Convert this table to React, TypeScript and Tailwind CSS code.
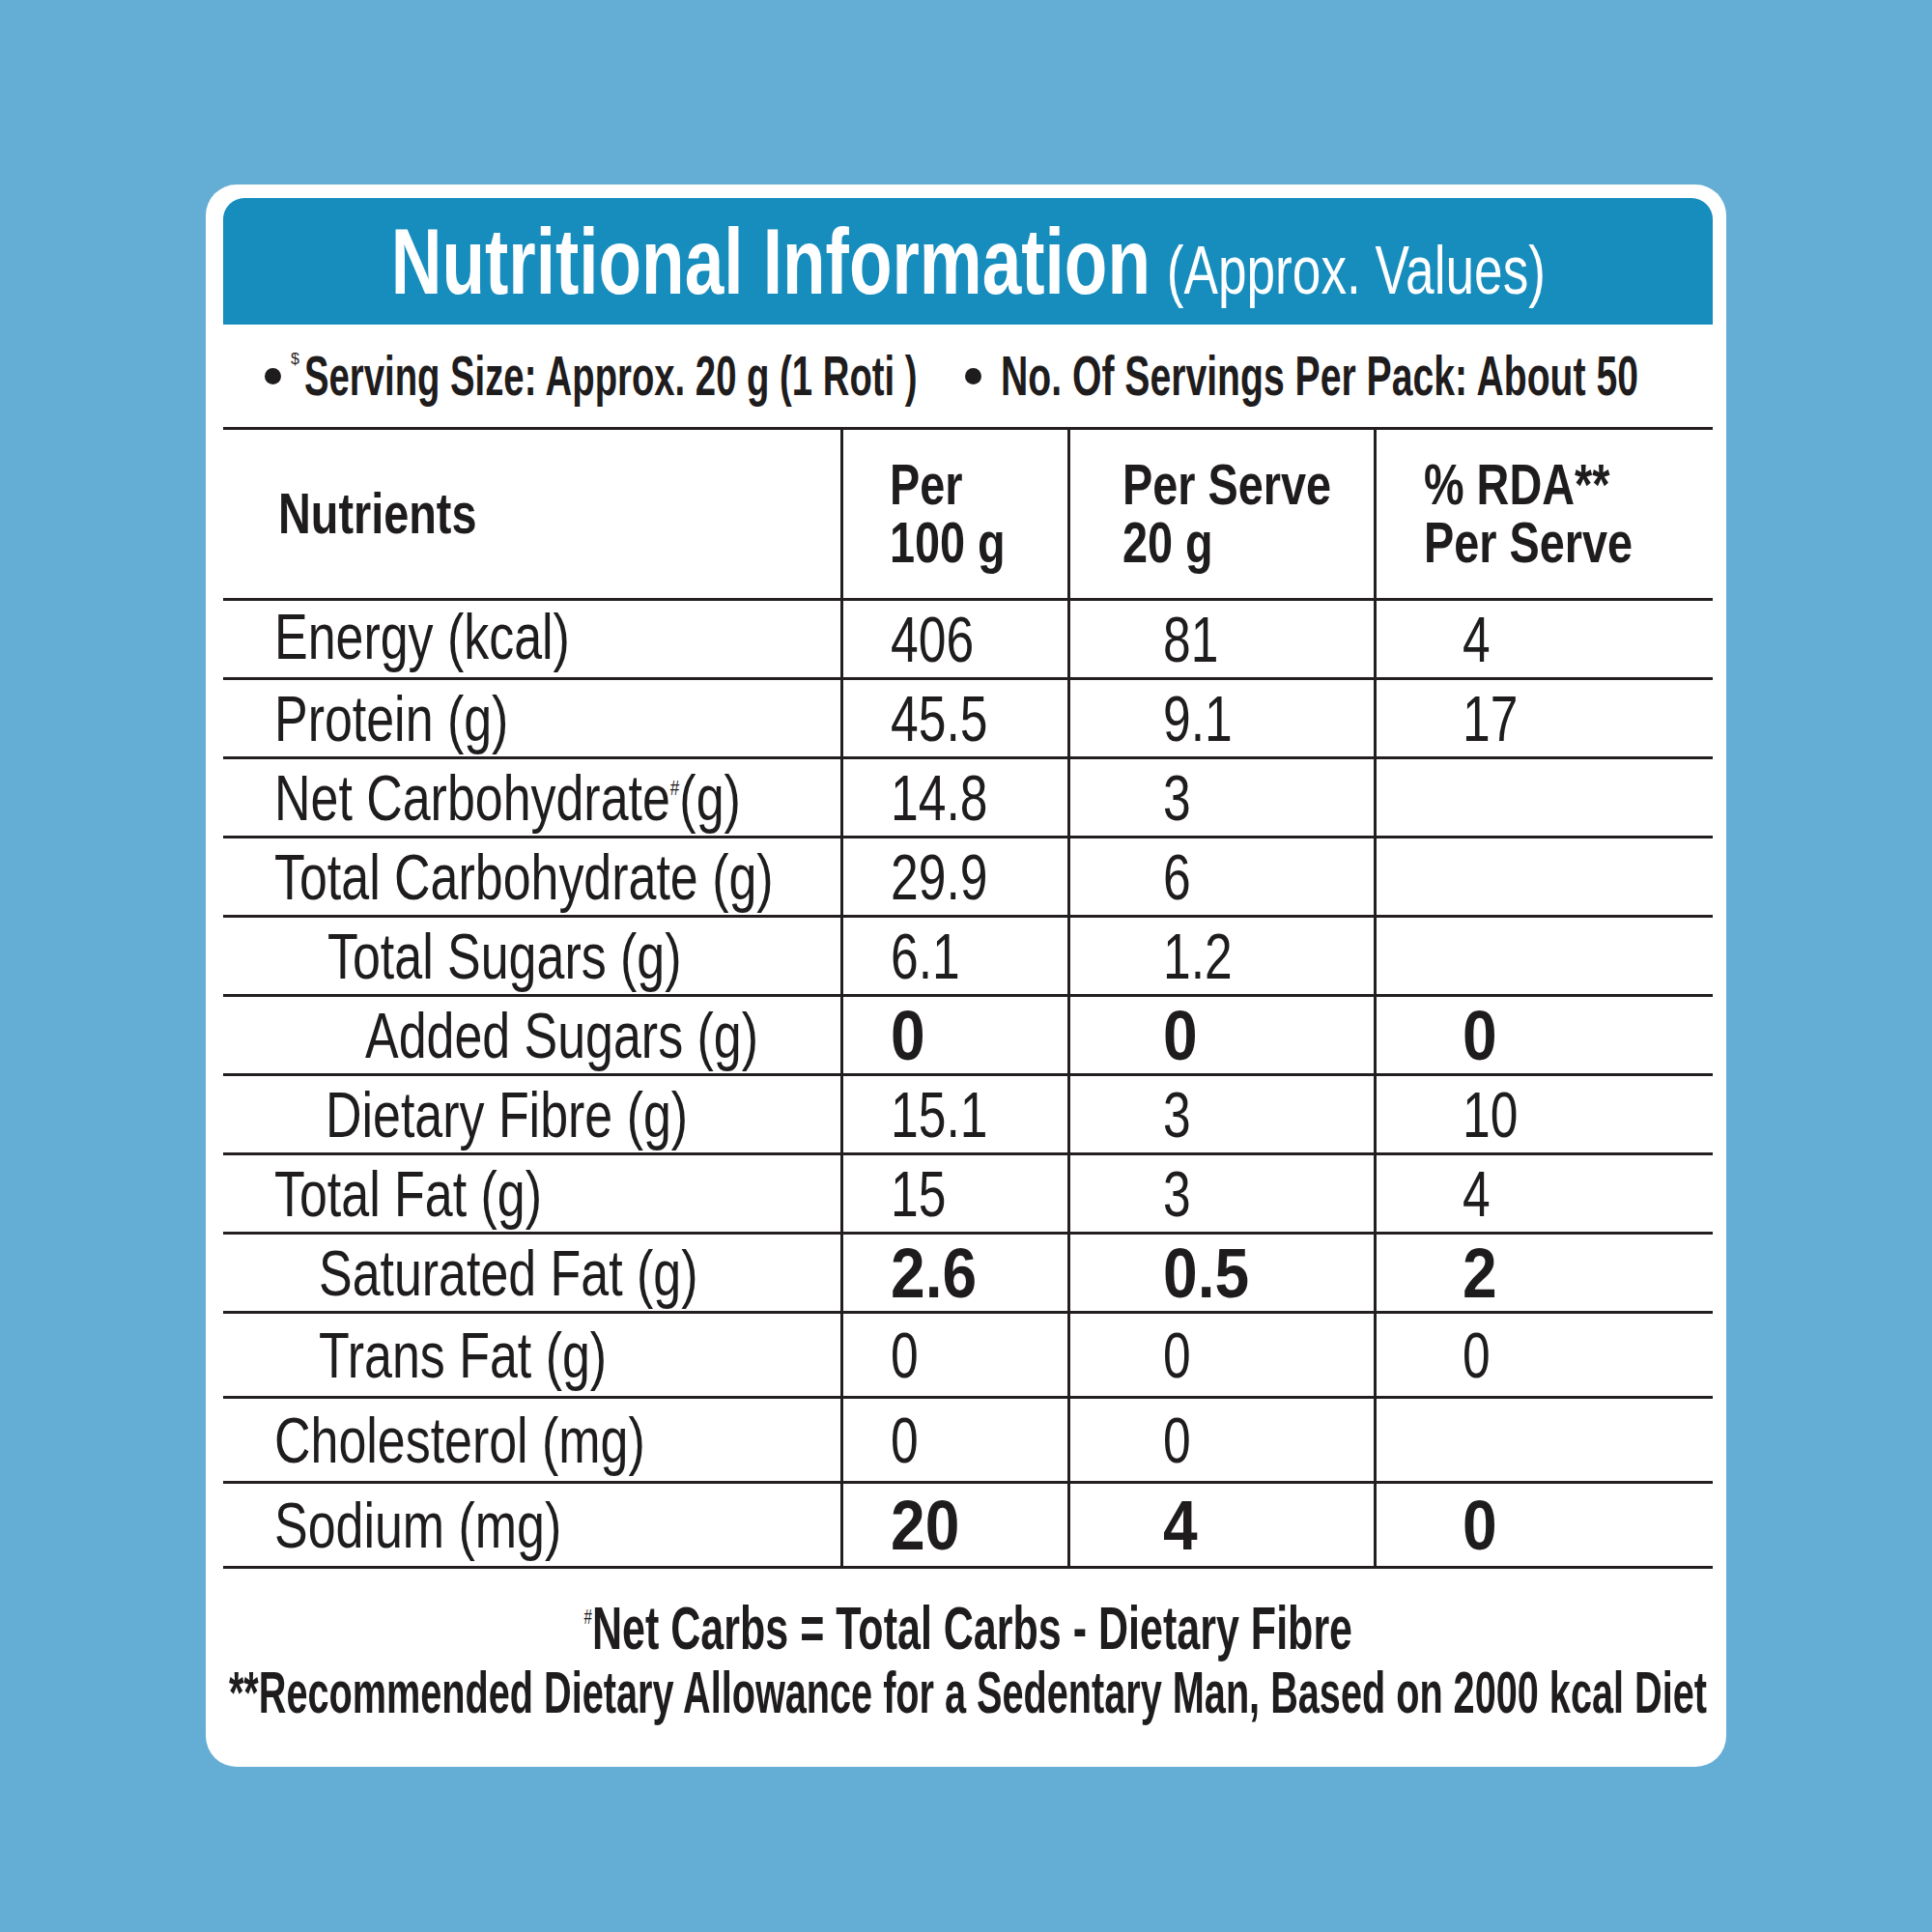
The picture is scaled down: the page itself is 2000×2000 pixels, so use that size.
import React from 'react'

type Row = {
  name: React.ReactNode
  indent: string
  tall?: boolean
  bold?: boolean
  v: [string, string, string]
}

const rows: Row[] = [
  { name: 'Energy (kcal)', indent: 'pl-[53px] pb-[6px]', v: ['406', '81', '4'] },
  { name: 'Protein (g)', indent: 'pl-[53px]', v: ['45.5', '9.1', '17'] },
  {
    name: (
      <>
        Net Carbohydrate
        <span className="relative -top-[26px] text-[22px]">#</span>
        (g)
      </>
    ),
    indent: 'pl-[53px]',
    v: ['14.8', '3', ''],
  },
  { name: 'Total Carbohydrate (g)', indent: 'pl-[53px]', v: ['29.9', '6', ''] },
  { name: 'Total Sugars (g)', indent: 'pl-[108px]', v: ['6.1', '1.2', ''] },
  { name: 'Added Sugars (g)', indent: 'pl-[147px]', v: ['0', '0', '0'], bold: true },
  { name: 'Dietary Fibre (g)', indent: 'pl-[106px]', v: ['15.1', '3', '10'] },
  { name: 'Total Fat (g)', indent: 'pl-[53px]', v: ['15', '3', '4'] },
  { name: 'Saturated Fat (g)', indent: 'pl-[99px]', v: ['2.6', '0.5', '2'], bold: true },
  { name: 'Trans Fat (g)', indent: 'pl-[99px]', v: ['0', '0', '0'], tall: true },
  { name: 'Cholesterol (mg)', indent: 'pl-[53px]', v: ['0', '0', ''], tall: true },
  { name: 'Sodium (mg)', indent: 'pl-[53px]', v: ['20', '4', '0'], tall: true, bold: true },
]

function Value({ text, bold }: { text: string; bold?: boolean }) {
  if (bold) {
    return (
      <span className="inline-block origin-left scale-x-[0.89] whitespace-nowrap text-[72px] font-bold leading-none">
        {text}
      </span>
    )
  }
  return (
    <span className="inline-block origin-left scale-x-[0.77] whitespace-nowrap text-[67px] leading-none">
      {text}
    </span>
  )
}

function NutrientRow({ row }: { row: Row }) {
  return (
    <div
      className={`grid grid-cols-[639px_235px_317px_351px] border-b-[3px] border-[#231f20] ${
        row.tall ? 'h-[88px]' : 'h-[82px]'
      }`}
    >
      <div className={`flex items-center ${row.indent}`}>
        <span className="inline-block origin-left scale-x-[0.775] whitespace-nowrap text-[67px] leading-none">
          {row.name}
        </span>
      </div>
      <div className="flex items-center border-l-[3px] border-[#231f20] pl-[49px]">
        <Value text={row.v[0]} bold={row.bold} />
      </div>
      <div className="flex items-center border-l-[3px] border-[#231f20] pl-[96px]">
        <Value text={row.v[1]} bold={row.bold} />
      </div>
      <div className="flex items-center border-l-[3px] border-[#231f20] pl-[89px]">
        <Value text={row.v[2]} bold={row.bold} />
      </div>
    </div>
  )
}

function HeadLines({ a, b }: { a: string; b: string }) {
  return (
    <div className="flex flex-col items-start justify-center">
      <span className="inline-block h-[60px] origin-left scale-x-[0.78] whitespace-nowrap">{a}</span>
      <span className="inline-block h-[60px] origin-left scale-x-[0.78] whitespace-nowrap">{b}</span>
    </div>
  )
}

export default function App() {
  return (
    <div className="h-[2000px] w-[2000px] bg-[#64add5] pl-[213px] pt-[191px] font-['Liberation_Sans',Arial,sans-serif] text-[#1f1c1d]">
      <div className="flex h-[1638px] w-[1574px] flex-col rounded-[32px] bg-white pl-[18px] pr-[14px] pt-[14px]">
        {/* header band */}
        <div className="flex h-[131px] items-center justify-center rounded-t-[22px] bg-[#178dbe] text-white">
          <span className="inline-block shrink-0 origin-center scale-x-[0.76] whitespace-nowrap leading-none">
            <span className="text-[96px] font-bold">Nutritional Information</span>
            <span className="ml-[22px] text-[70px]">(Approx. Values)</span>
          </span>
        </div>

        {/* serving info */}
        <div className="flex h-[106px] items-center pl-[43px] text-[58px] font-bold leading-none">
          <div className="flex w-[725px] shrink-0 items-center">
            <span className="h-[17px] w-[17px] shrink-0 rounded-full bg-[#1f1c1d]" />
            <span className="relative -top-[17px] ml-[10px] text-[16px] font-normal">$</span>
            <span className="ml-[5px] inline-block shrink-0 origin-left scale-x-[0.66] whitespace-nowrap">
              Serving Size: Approx. 20 g (1 Roti )
            </span>
          </div>
          <span className="h-[17px] w-[17px] shrink-0 rounded-full bg-[#1f1c1d]" />
          <span className="ml-[20px] inline-block shrink-0 origin-left scale-x-[0.675] whitespace-nowrap">
            No. Of Servings Per Pack: About 50
          </span>
        </div>

        {/* table */}
        <div className="border-t-[3px] border-[#231f20]">
          <div className="grid h-[177px] grid-cols-[639px_235px_317px_351px] border-b-[3px] border-[#231f20] text-[60px] font-bold leading-[60px]">
            <div className="flex items-center pl-[57px]">
              <span className="inline-block origin-left scale-x-[0.78] whitespace-nowrap">Nutrients</span>
            </div>
            <div className="flex border-l-[3px] border-[#231f20] pl-[48px]">
              <HeadLines a="Per" b="100 g" />
            </div>
            <div className="flex border-l-[3px] border-[#231f20] pl-[54px]">
              <HeadLines a="Per Serve" b="20 g" />
            </div>
            <div className="flex border-l-[3px] border-[#231f20] pl-[49px]">
              <HeadLines a="% RDA**" b="Per Serve" />
            </div>
          </div>
          {rows.map((row, i) => (
            <NutrientRow key={i} row={row} />
          ))}
        </div>

        {/* footnotes */}
        <div className="flex flex-1 flex-col items-center pt-[30px] font-bold leading-none">
          <span className="inline-block shrink-0 origin-center scale-x-[0.683] whitespace-nowrap text-[63px]">
            <span className="relative -top-[26px] text-[22px] font-normal">#</span>
            Net Carbs = Total Carbs - Dietary Fibre
          </span>
          <span className="mt-[5px] inline-block shrink-0 origin-center scale-x-[0.65] whitespace-nowrap text-[61px]">
            **Recommended Dietary Allowance for a Sedentary Man, Based on 2000 kcal Diet
          </span>
        </div>
      </div>
    </div>
  )
}
